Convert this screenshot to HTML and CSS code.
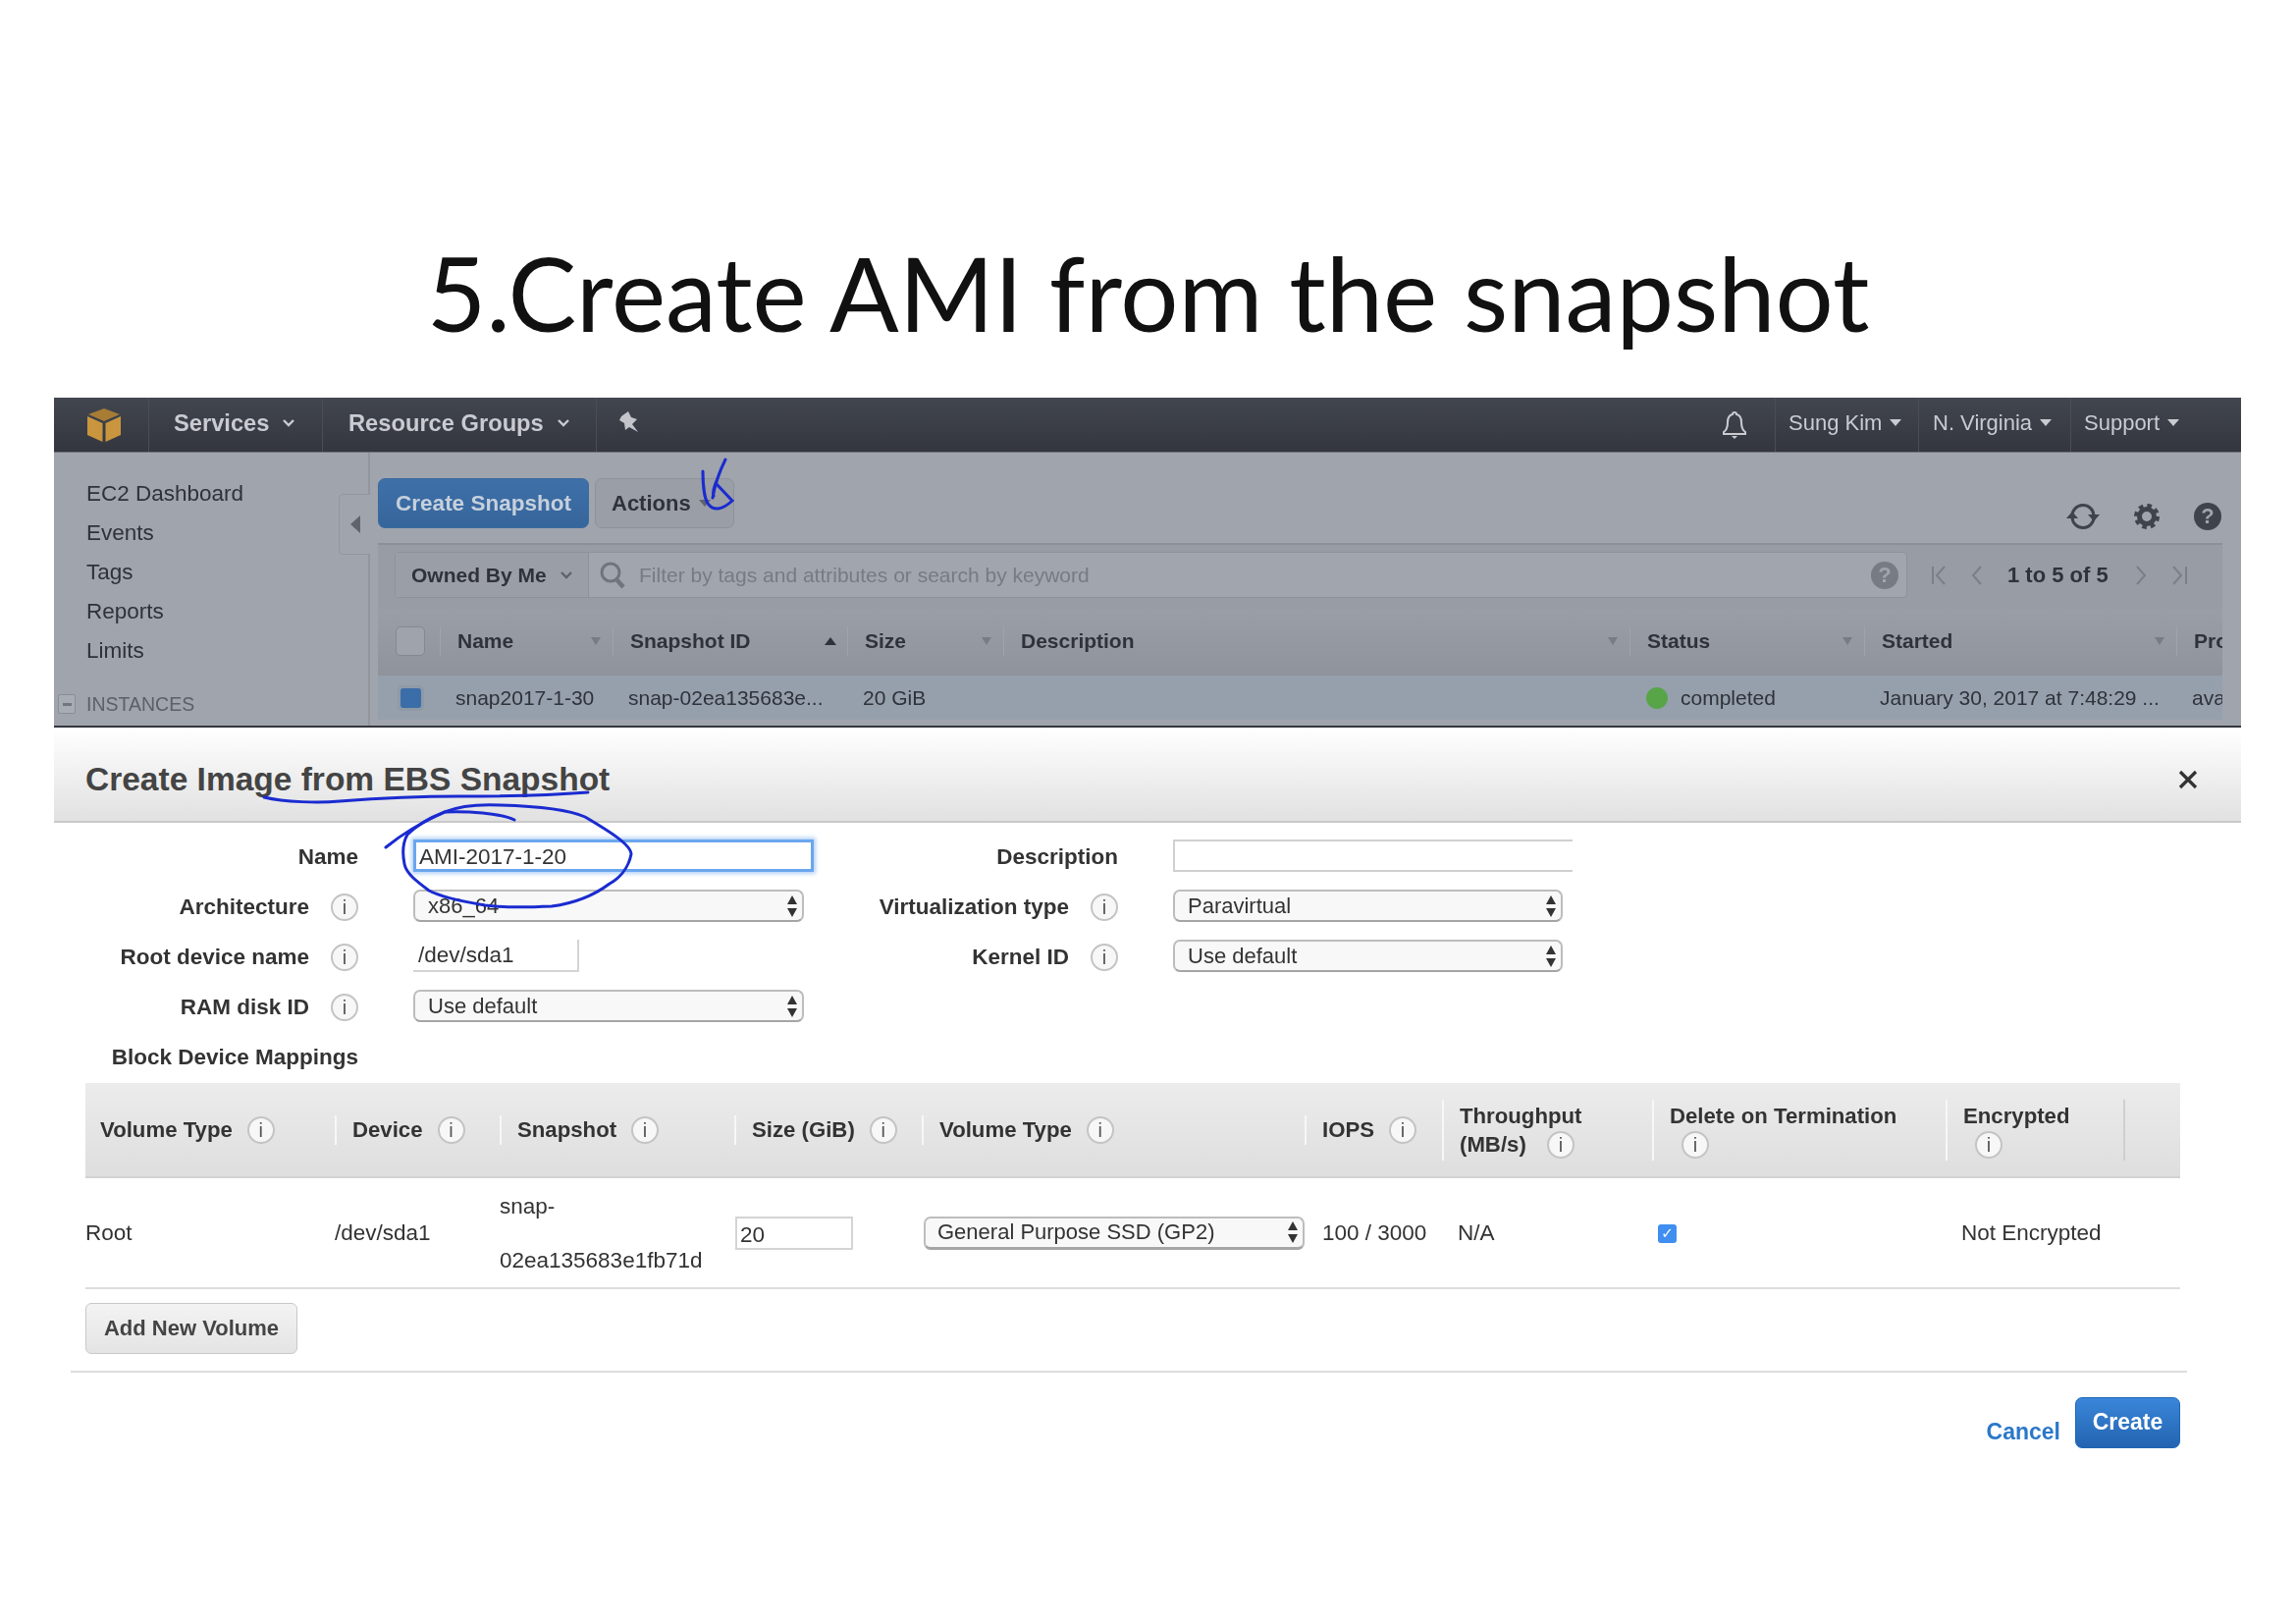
FILE: index.html
```html
<!DOCTYPE html>
<html lang="en">
<head>
    <meta charset="UTF-8">
    <link rel="stylesheet" href="styles.css">
    <title>Create AMI from the snapshot</title>
</head>
<body>

<svg class="defs" width="0" height="0">
    <symbol id="updown" viewBox="0 0 12 22">
        <path d="M6 0l5 9H1zM6 22l-5-9h10z" fill="#333"/>
    </symbol>
    <symbol id="sort" viewBox="0 0 12 8">
        <path d="M1 0h10L6 8z" fill="#787c84"/>
    </symbol>
    <symbol id="caret" viewBox="0 0 12 8">
        <path d="M1 1l5 5 5-5" fill="none" stroke="currentColor" stroke-width="2.4"/>
    </symbol>
    <symbol id="tri" viewBox="0 0 12 8">
        <path d="M0 0h12L6 7z" fill="currentColor"/>
    </symbol>
</svg>

<div class="slide">
    <h1 class="slide-title">5.Create AMI from the snapshot</h1>

    <div class="console">
        <nav class="topnav">
            <div class="nav-logo">
                <svg width="34" height="34" viewBox="0 0 34 34">
                    <path d="M17 0l16 6-16 7L1 6z" fill="#a87c35"/>
                    <path d="M0 8l15.500 7v19L0 27z" fill="#c9963f"/>
                    <path d="M34 8l-15.500 7v19L34 27z" fill="#c9963f"/>
                </svg>
            </div>
            <div class="nav-item nav-services">Services <svg class="caret"><use href="#caret"/></svg></div>
            <div class="nav-item nav-groups">Resource Groups <svg class="caret"><use href="#caret"/></svg></div>
            <div class="nav-pin">
                <svg width="22" height="24" viewBox="0 0 22 24"><path d="M3 6l7-5 3 6 6 2-5 5 6 8-9-5-4 3-1-7-5-3z" fill="#c3c5ca"/></svg>
            </div>
            <div class="nav-bell">
                <svg width="28" height="30" viewBox="0 0 28 30">
                    <path d="M14 2c-1.500 0-2 1-2 2-4 1-5 4-5 8 0 5-1 8-4 10v2h22v-2c-3-2-4-5-4-10 0-4-1-7-5-8 0-1-.5-2-2-2z" fill="none" stroke="#c9cbd0" stroke-width="2"/>
                    <path d="M11 26h6l-3 3z" fill="#c9cbd0"/>
                </svg>
            </div>
            <div class="nav-right nav-user">Sung Kim <svg class="tri"><use href="#tri"/></svg></div>
            <div class="nav-right nav-region">N. Virginia <svg class="tri"><use href="#tri"/></svg></div>
            <div class="nav-right nav-support">Support <svg class="tri"><use href="#tri"/></svg></div>
        </nav>

        <div class="console-body">
            <aside class="sidebar">
                <div class="side-link">EC2 Dashboard</div>
                <div class="side-link">Events</div>
                <div class="side-link">Tags</div>
                <div class="side-link">Reports</div>
                <div class="side-link">Limits</div>
                <div class="side-group"><span class="minus"></span>INSTANCES</div>
                <div class="collapse-tab"><span class="collapse-arrow"></span></div>
            </aside>

            <main class="content">
                <div class="toolbar">
                    <button class="btn-primary">Create Snapshot</button>
                    <button class="btn-actions">Actions <svg class="tri"><use href="#tri"/></svg></button>
                    <div class="tool-icons">
                        <svg width="34" height="30" viewBox="0 0 34 30">
                            <path d="M6 15a11 11 0 0 1 22-1M28 15a11 11 0 0 1-22 1" fill="none" stroke="#3f434c" stroke-width="3"/>
                            <path d="M22 13h12l-6 7zM0 17h12l-6-7z" fill="#3f434c"/>
                        </svg>
                        <svg width="26" height="26" viewBox="0 0 26 26">
                            <circle cx="13" cy="13" r="7.500" fill="none" stroke="#3f434c" stroke-width="5"/>
                            <circle cx="13" cy="13" r="11" fill="none" stroke="#3f434c" stroke-width="4" stroke-dasharray="4.600 4.040"/>
                        </svg>
                        <span class="help-dark">?</span>
                    </div>
                </div>

                <div class="filter-band">
                    <div class="filter-box">
                        <div class="owned">Owned By Me <svg class="caret"><use href="#caret"/></svg></div>
                        <svg class="search-icon" width="28" height="30" viewBox="0 0 28 30">
                            <circle cx="12" cy="12" r="9" fill="none" stroke="#70747c" stroke-width="3"/>
                            <path d="M18 19l7 8" stroke="#70747c" stroke-width="4.500"/>
                        </svg>
                        <div class="filter-hint">Filter by tags and attributes or search by keyword</div>
                        <span class="help-gray">?</span>
                    </div>
                    <div class="pager">
                        <svg width="16" height="20" viewBox="0 0 16 20"><path d="M2 1v18M14 1L6 10l8 9" fill="none" stroke="#7b7f87" stroke-width="2"/></svg>
                        <svg width="14" height="20" viewBox="0 0 14 20"><path d="M11 1L3 10l8 9" fill="none" stroke="#7b7f87" stroke-width="2"/></svg>
                        <span class="pager-text">1 to 5 of 5</span>
                        <svg width="14" height="20" viewBox="0 0 14 20"><path d="M3 1l8 9-8 9" fill="none" stroke="#7b7f87" stroke-width="2"/></svg>
                        <svg width="18" height="20" viewBox="0 0 18 20"><path d="M2 1l8 9-8 9M15 1v18" fill="none" stroke="#7b7f87" stroke-width="2"/></svg>
                    </div>
                </div>

                <div class="grid-head">
                    <div class="gh gh-check"><span class="empty-check"></span></div>
                    <div class="gh">Name <svg class="sort"><use href="#sort"/></svg></div>
                    <div class="gh">Snapshot ID <span class="sort-up"></span></div>
                    <div class="gh">Size <svg class="sort"><use href="#sort"/></svg></div>
                    <div class="gh">Description <svg class="sort"><use href="#sort"/></svg></div>
                    <div class="gh">Status <svg class="sort"><use href="#sort"/></svg></div>
                    <div class="gh">Started <svg class="sort"><use href="#sort"/></svg></div>
                    <div class="gh gh-clip">Pro</div>
                </div>
                <div class="grid-row">
                    <div class="gr gr-check"><span class="blue-check"></span></div>
                    <div class="gr">snap2017-1-30</div>
                    <div class="gr">snap-02ea135683e...</div>
                    <div class="gr">20 GiB</div>
                    <div class="gr"></div>
                    <div class="gr gr-status"><span class="dot"></span>completed</div>
                    <div class="gr">January 30, 2017 at 7:48:29 ...</div>
                    <div class="gr gr-clip">ava</div>
                </div>
            </main>
        </div>
    </div>

    <section class="dialog">
        <header class="dialog-head">
            <h2>Create Image from EBS Snapshot</h2>
            <svg width="22" height="22" viewBox="0 0 22 22"><path d="M3 3l16 16M19 3L3 19" stroke="#333" stroke-width="3.200"/></svg>
        </header>

        <div class="form-grid">
            <div class="f-label">Name</div>
            <div class="f-name">AMI-2017-1-20</div>
            <div class="f-label">Description</div>
            <div class="f-desc"></div>

            <div class="f-label">Architecture <span class="info">i</span></div>
            <div class="select f-left">x86_64 <svg class="updown"><use href="#updown"/></svg></div>
            <div class="f-label">Virtualization type <span class="info">i</span></div>
            <div class="select f-right">Paravirtual <svg class="updown"><use href="#updown"/></svg></div>

            <div class="f-label">Root device name <span class="info">i</span></div>
            <div class="f-root">/dev/sda1</div>
            <div class="f-label">Kernel ID <span class="info">i</span></div>
            <div class="select f-right">Use default <svg class="updown"><use href="#updown"/></svg></div>

            <div class="f-label">RAM disk ID <span class="info">i</span></div>
            <div class="select f-left">Use default <svg class="updown"><use href="#updown"/></svg></div>
            <div></div>
            <div></div>

            <div class="f-label">Block Device Mappings</div>
        </div>

        <div class="vol-table">
            <div class="vol-head">
                <div class="vh vh-first">Volume Type <span class="info">i</span></div>
                <div class="vh">Device <span class="info">i</span></div>
                <div class="vh">Snapshot <span class="info">i</span></div>
                <div class="vh">Size (GiB) <span class="info">i</span></div>
                <div class="vh">Volume Type <span class="info">i</span></div>
                <div class="vh">IOPS <span class="info">i</span></div>
                <div class="vh vh-tall"><div class="vh-lines">Throughput<br>(MB/s) <span class="info">i</span></div></div>
                <div class="vh vh-tall"><div class="vh-lines">Delete on Termination<br><span class="info info-under">i</span></div></div>
                <div class="vh vh-tall"><div class="vh-lines">Encrypted<br><span class="info info-under">i</span></div></div>
                <div class="vh vh-tall vh-last"></div>
            </div>
            <div class="vol-row">
                <div>Root</div>
                <div>/dev/sda1</div>
                <div class="vol-snap">snap-<br>02ea135683e1fb71d</div>
                <div><div class="vol-size">20</div></div>
                <div class="vol-type-cell"><div class="select vol-type">General Purpose SSD (GP2) <svg class="updown"><use href="#updown"/></svg></div></div>
                <div class="vol-iops">100 / 3000</div>
                <div class="vol-na">N/A</div>
                <div class="vol-check-cell"><span class="vol-check">&#10003;</span></div>
                <div class="vol-enc">Not Encrypted</div>
            </div>
        </div>

        <button class="btn-add">Add New Volume</button>
        <div class="rule"></div>

        <footer class="dialog-foot">
            <a class="cancel">Cancel</a>
            <button class="btn-create">Create</button>
        </footer>
    </section>

    <!-- pen marks drawn on top of the slide -->
    <svg class="pen" width="2339" height="1654" viewBox="0 0 2339 1654">
        <g fill="none" stroke="#1a2bd0" stroke-width="3" stroke-linecap="round">
            <path d="M739 468C733 480 728 495 726 507M716 480C716 495 718 510 722 514C727 520 735 520 746 510L729 492C727 497 726 502 727 505"/>
            <path d="M269 812C290 817 325 818 346 816C385 813 430 811 468 811C510 811 560 810 599 807"/>
            <path d="M393 863C415 845 435 835 453 827C475 826 510 828 524 835"/>
            <path d="M453 827C470 820 490 819 510 820C545 821 580 825 596 832C618 845 643 860 643 870C640 885 630 895 621 900C605 912 585 920 562 923C540 924 515 925 494 922C470 918 450 914 437 907C425 898 414 890 412 880C409 865 411 857 415 850C425 840 440 832 453 827"/>
        </g>
    </svg>
</div>

</body>
</html>
```

FILE: styles.css
```css
* {
    box-sizing: border-box;
}

html, body {
    margin: 0;
    padding: 0;
    background: #ffffff;
}

body {
    font-family: "Liberation Sans", Arial, sans-serif;
    font-size: 22.5px;
    color: #333333;
}

button {
    font-family: inherit;
}

.defs {
    position: absolute;
}

.slide {
    position: relative;
    width: 2339px;
    height: 1654px;
    overflow: hidden;
}

.slide-title {
    height: 405px;
    margin: 0;
    padding-bottom: 42px;
    display: flex;
    align-items: flex-end;
    justify-content: center;
    font-family: Lato, sans-serif;
    font-weight: 400;
    font-size: 104.5px;
    line-height: 130px;
    color: #111111;
}

.pen {
    position: absolute;
    left: 0;
    top: 0;
    pointer-events: none;
}

/* dimmed console behind the dialog */
.console {
    margin: 0 56px 0 55px;
    height: 336px;
    background: #a0a4ac;
    border-bottom: 2px solid #33363e;
    color: #2f323a;
    filter: blur(0.5px);
}

.topnav {
    height: 56px;
    display: flex;
    align-items: center;
    background: linear-gradient(#42464f, #33363f);
    border-bottom: 1px solid #6f727a;
    color: #c9cbd0;
    font-size: 23.7px;
}

.nav-logo {
    width: 97px;
    padding-left: 34px;
    height: 100%;
    display: flex;
    align-items: center;
    border-right: 1px solid #4a4d56;
}

.nav-item {
    height: 100%;
    padding-bottom: 3px;
    display: flex;
    align-items: center;
    font-weight: bold;
    border-right: 1px solid #4a4d56;
}

.nav-services {
    width: 177px;
    padding-left: 25px;
}

.nav-groups {
    width: 279px;
    padding-left: 26px;
}

.caret {
    width: 12px;
    height: 8px;
    margin-left: 14px;
}

.tri {
    width: 12px;
    height: 8px;
    margin-left: 8px;
}

.nav-pin {
    padding-left: 22px;
    padding-bottom: 6px;
    display: flex;
}

.nav-bell {
    margin-left: auto;
    width: 55px;
    display: flex;
}

.nav-right {
    height: 100%;
    padding-bottom: 3px;
    display: flex;
    align-items: center;
    border-left: 1px solid #4a4d56;
    font-size: 22px;
}

.nav-user {
    width: 146px;
    padding-left: 13px;
}

.nav-region {
    width: 155px;
    padding-left: 14px;
}

.nav-support {
    width: 174px;
    padding-left: 13px;
}

.console-body {
    display: flex;
    height: 278px;
}

.sidebar {
    position: relative;
    width: 322px;
    padding: 22px 0 0 33px;
    border-right: 2px solid #92969e;
}

.side-link {
    height: 40px;
    line-height: 40px;
}

.side-group {
    display: flex;
    align-items: center;
    margin: 14px 0 0 -29px;
    height: 40px;
    font-size: 19.5px;
    color: #5c6068;
}

.minus {
    width: 18px;
    height: 20px;
    margin-right: 11px;
    background: linear-gradient(#72767e, #72767e) center / 9px 3px no-repeat;
    border: 1px solid #8a8e96;
    background-color: #a8acb3;
    border-radius: 2px;
}

.collapse-tab {
    position: absolute;
    right: -2px;
    top: 42px;
    width: 32px;
    height: 62px;
    display: flex;
    align-items: center;
    justify-content: center;
    background: #a0a4ac;
    border: 1px solid #92969e;
    border-right: none;
    border-radius: 5px 0 0 5px;
}

.collapse-arrow {
    width: 0;
    height: 0;
    border-top: 9px solid transparent;
    border-bottom: 9px solid transparent;
    border-right: 10px solid #5f636b;
}

.content {
    flex: 1;
    padding: 0 19px 0 8px;
}

.toolbar {
    height: 92px;
    padding-top: 26px;
    display: flex;
    align-items: flex-start;
}

.btn-primary {
    width: 215px;
    height: 51px;
    border: 1px solid #3a6ba0;
    border-radius: 7px;
    background: linear-gradient(#3f70a8, #35659b);
    color: #c6d0dc;
    font-size: 22.5px;
    font-weight: bold;
}

.btn-actions {
    width: 142px;
    height: 51px;
    margin-left: 6px;
    padding: 0 0 0 16px;
    display: flex;
    align-items: center;
    border: 1px solid #8e9299;
    border-radius: 7px;
    background: #9a9ea6;
    color: #2f323a;
    font-size: 22px;
    font-weight: bold;
}

.btn-actions .tri {
    color: #5f636b;
}

.tool-icons {
    margin: 24px 1px 0 auto;
    display: flex;
    align-items: center;
    gap: 35px;
}

.help-dark {
    width: 28px;
    height: 28px;
    border-radius: 50%;
    background: #3f434c;
    color: #a0a4ac;
    font-size: 22px;
    font-weight: bold;
    line-height: 28px;
    text-align: center;
}

.filter-band {
    height: 67px;
    padding: 7px 0 0 17px;
    display: flex;
    align-items: flex-start;
    background: #989ca4;
    border-top: 2px solid #8b8f97;
}

.filter-box {
    width: 1541px;
    height: 47px;
    display: flex;
    align-items: center;
    background: #a1a5ad;
    border: 1px solid #8e9299;
    border-radius: 4px;
}

.owned {
    width: 197px;
    height: 100%;
    padding-left: 16px;
    display: flex;
    align-items: center;
    background: #9a9ea6;
    border-right: 1px solid #8e9299;
    font-size: 21px;
    font-weight: bold;
}

.owned .caret {
    color: #5f636b;
    margin-left: 14px;
}

.search-icon {
    margin-left: 10px;
}

.filter-hint {
    margin-left: 13px;
    color: #777b83;
    font-size: 21px;
}

.help-gray {
    margin-left: auto;
    margin-right: 8px;
    width: 28px;
    height: 28px;
    border-radius: 50%;
    background: #777b83;
    color: #a1a5ad;
    font-size: 22px;
    font-weight: bold;
    line-height: 28px;
    text-align: center;
}

.pager {
    margin-left: 24px;
    height: 47px;
    display: flex;
    align-items: center;
    gap: 24px;
}

.pager-text {
    width: 105px;
    font-weight: bold;
    font-size: 22px;
    white-space: nowrap;
}

.grid-head, .grid-row {
    display: grid;
    grid-template-columns: 63px 176px 239px 159px 638px 239px 318px 47px;
}

.grid-head {
    height: 68px;
    padding-bottom: 2px;
    background: linear-gradient(#9a9ea6, #8f939b);
    align-items: center;
}

.gh {
    position: relative;
    height: 30px;
    padding-left: 17px;
    line-height: 30px;
    font-size: 21px;
    font-weight: bold;
    border-left: 1px solid #9fa3ab;
    white-space: nowrap;
}

.gh-check {
    border-left: none;
    padding-left: 18px;
    display: flex;
    align-items: center;
}

.gh-clip, .gr-clip {
    overflow: hidden;
}

.empty-check {
    width: 30px;
    height: 30px;
    border: 1px solid #85898f;
    border-radius: 5px;
    background: #9fa3ab;
}

.sort {
    position: absolute;
    right: 11px;
    top: 11px;
    width: 12px;
    height: 8px;
}

.sort-up {
    position: absolute;
    right: 11px;
    top: 11px;
    width: 0;
    height: 0;
    border-left: 6px solid transparent;
    border-right: 6px solid transparent;
    border-bottom: 8px solid #2f323a;
}

.grid-row {
    height: 45px;
    background: #95a0ac;
    align-items: center;
    font-size: 21px;
}

.gr {
    padding-left: 16px;
    white-space: nowrap;
}

.gr-check {
    padding-left: 23px;
    display: flex;
    align-items: center;
}

.blue-check {
    width: 21px;
    height: 20px;
    background: #3b6ea8;
    border-radius: 2px;
    outline: 3px solid #8f9aa6;
}

.gr-status {
    display: flex;
    align-items: center;
    padding-left: 17px;
}

.dot {
    width: 22px;
    height: 22px;
    margin-right: 13px;
    border-radius: 50%;
    background: #58a548;
}

/* dialog */
.dialog {
    margin: 0 56px 0 55px;
    filter: blur(0.5px);
}

.dialog-head {
    height: 97px;
    padding: 10px 43px 0 32px;
    display: flex;
    align-items: center;
    justify-content: space-between;
    background: linear-gradient(#ffffff, #e1e1e1);
    border-bottom: 2px solid #c9c9c9;
}

.dialog-head h2 {
    margin: 0;
    font-size: 33.5px;
    color: #444444;
}

.form-grid {
    margin-top: 17px;
    display: grid;
    grid-template-columns: 310px 408px 254px 407px;
    grid-auto-rows: 33px;
    column-gap: 56px;
    row-gap: 18px;
    align-items: center;
}

.f-label {
    display: flex;
    align-items: center;
    justify-content: flex-end;
    padding-top: 2px;
    font-weight: bold;
    white-space: nowrap;
    color: #333333;
}

.info {
    display: inline-block;
    width: 28px;
    height: 28px;
    margin-left: 22px;
    border: 2px solid #c4c4c4;
    border-radius: 50%;
    background: #f7f7f7;
    color: #555555;
    font-size: 20px;
    font-weight: normal;
    line-height: 24px;
    text-align: center;
}

.f-name {
    height: 33px;
    line-height: 29px;
    padding-left: 3px;
    border: 3px solid #6aa6ee;
    box-shadow: 0 0 4px 2px #b4d2f6;
    width: 408px;
}

.f-desc {
    height: 33px;
    border: 2px solid #d0d0d0;
    border-right: none;
}

.f-root {
    width: 169px;
    height: 33px;
    line-height: 32px;
    padding-left: 5px;
    border-right: 2px solid #d4d4d4;
    border-bottom: 2px solid #d4d4d4;
}

.select {
    height: 33px;
    padding: 0 4px 0 13px;
    display: flex;
    align-items: center;
    justify-content: space-between;
    border: 2px solid #bdbdbd;
    border-bottom-color: #a5a5a5;
    border-radius: 7px;
    background: #f8f8f8;
    font-size: 22px;
    color: #333333;
}

.f-left {
    width: 398px;
}

.f-right {
    width: 397px;
}

.updown {
    width: 12px;
    height: 22px;
}

/* block device table */
.vol-table {
    margin: 11px 62px 0 32px;
}

.vol-head, .vol-row {
    display: grid;
    grid-template-columns: 254px 168px 239px 191px 390px 140px 214px 299px 181px 58px;
}

.vol-head {
    height: 97px;
    align-items: center;
    background: linear-gradient(#ececec, #dedede);
    border-bottom: 2px solid #d2d2d2;
    font-size: 22.2px;
}

.vh {
    height: 30px;
    padding-left: 16px;
    display: flex;
    align-items: center;
    border-left: 2px solid #f7f7f7;
    font-weight: bold;
    white-space: nowrap;
}

.vh .info {
    margin-left: 15px;
}

.vh-first {
    border-left: none;
    padding-left: 15px;
}

.vh-tall {
    height: 62px;
}

.vh-last {
    border-left-color: #cfcfcf;
}

.vh-lines {
    line-height: 29px;
}

.vh .info-under {
    margin-left: 12px;
}

.vol-row {
    height: 113px;
    align-items: center;
    border-bottom: 2px solid #dddddd;
    font-size: 22.5px;
}

.vol-snap {
    line-height: 55px;
}

.vol-size {
    width: 120px;
    height: 34px;
    margin-left: 1px;
    padding-left: 3px;
    line-height: 33px;
    border: 2px solid #d4d4d4;
}

.vol-type-cell {
    padding-left: 2px;
}

.vol-type {
    width: 388px;
    height: 34px;
    padding-left: 12px;
    font-size: 22px;
    border-bottom-width: 3px;
}

.vol-iops {
    padding-left: 18px;
}

.vol-na {
    padding-left: 16px;
}

.vol-check-cell {
    padding-left: 6px;
}

.vol-check {
    display: block;
    width: 19px;
    height: 19px;
    margin-top: 2px;
    border-radius: 3px;
    background: #3f8ef0;
    color: #ffffff;
    font-size: 15px;
    font-family: "DejaVu Sans", sans-serif;
    line-height: 19px;
    text-align: center;
}

.vol-enc {
    padding-left: 16px;
    white-space: nowrap;
}

.btn-add {
    display: block;
    width: 216px;
    height: 52px;
    margin: 14px 0 17px 32px;
    border: 1px solid #c8c8c8;
    border-radius: 6px;
    background: linear-gradient(#f3f3f3, #e4e4e4);
    color: #444444;
    font-size: 22px;
    font-weight: bold;
}

.rule {
    height: 2px;
    margin: 0 55px 0 17px;
    background: #dddddd;
}

.dialog-foot {
    padding: 25px 62px 0 0;
    display: flex;
    justify-content: flex-end;
}

.cancel {
    align-self: flex-end;
    margin-right: 15px;
    color: #2b78c9;
    font-size: 23px;
    font-weight: bold;
    line-height: 34px;
}

.btn-create {
    width: 107px;
    height: 52px;
    padding-bottom: 3px;
    border: 1px solid #1f66b5;
    border-radius: 7px;
    background: linear-gradient(#3a86da, #2364b0);
    color: #ffffff;
    font-size: 23px;
    font-weight: bold;
}
```
